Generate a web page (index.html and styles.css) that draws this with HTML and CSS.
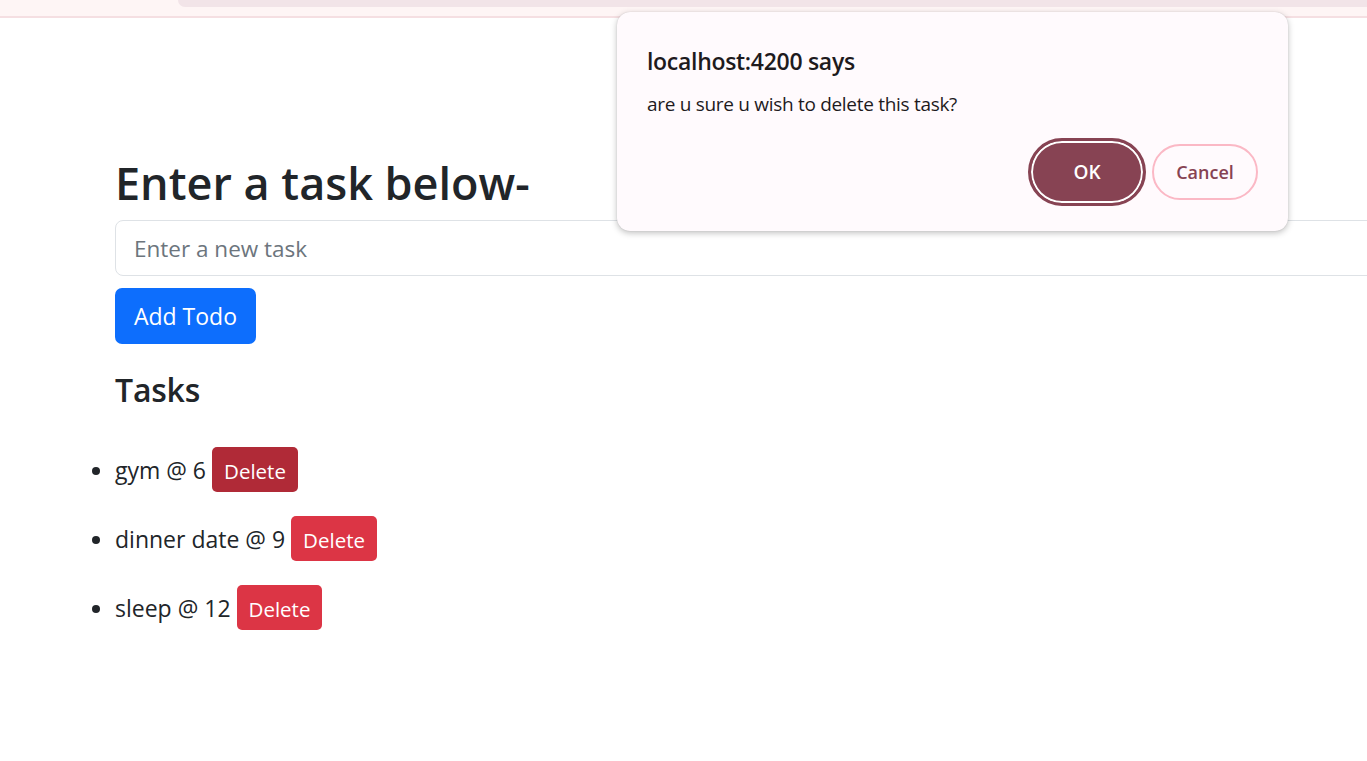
FILE: index.html
```html
<!DOCTYPE html>
<html lang="en">
<head>
<meta charset="utf-8">
<title>Todo</title>
<link rel="stylesheet" href="styles.css">
</head>
<body>
<div class="topbar"><div class="tab"></div></div>
<main class="container">
  <h1 class="title">Enter a task below-</h1>
  <input class="task-input" type="text" placeholder="Enter a new task">
  <button class="btn-add">Add Todo</button>
  <h2 class="tasks-title">Tasks</h2>
  <ul class="task-list">
    <li><div class="item"><span>gym @ 6</span><button class="btn-del btn-del-active">Delete</button></div></li>
    <li><div class="item"><span>dinner date @ 9</span><button class="btn-del">Delete</button></div></li>
    <li><div class="item"><span>sleep @ 12</span><button class="btn-del">Delete</button></div></li>
  </ul>
</main>
<div class="dialog">
  <div class="dialog-title">localhost:4200 says</div>
  <div class="dialog-msg">are u sure u wish to delete this task?</div>
  <div class="dialog-actions">
    <button class="btn-ok">OK</button>
    <button class="btn-cancel">Cancel</button>
  </div>
</div>
</body>
</html>
```

FILE: styles.css
```css
html, body {
  margin: 0;
  padding: 0;
  overflow: hidden;
  background: #ffffff;
  font-family: "Open Sans", "Noto Sans", sans-serif;
  color: #212529;
}
.topbar {
  height: 16px;
  background: #fef5f5;
  border-bottom: 2px solid #f5dfe2;
  position: relative;
}
.tab {
  position: absolute;
  left: 178px;
  right: 0;
  top: 0;
  height: 7px;
  background: #f2e4e8;
  border-bottom-left-radius: 12px;
}
.container {
  padding-left: 115px;
  padding-top: 138px;
}
.title {
  margin: 0 0 10px 0;
  font-size: 45px;
  font-weight: 600;
  line-height: 54px;
  letter-spacing: 0;
}
.task-input {
  display: block;
  box-sizing: border-box;
  width: 1300px;
  height: 56px;
  padding: 0 18px;
  font-family: inherit;
  font-size: 22.5px;
  color: #212529;
  border: 1px solid #dee2e6;
  border-radius: 8px;
  outline: none;
}
.task-input::placeholder {
  color: #6c757d;
}
.btn-add {
  display: block;
  margin-top: 12px;
  box-sizing: border-box;
  width: 141px;
  height: 56px;
  background: #0d6efd;
  color: #fff;
  border: none;
  border-radius: 7px;
  font-family: inherit;
  font-size: 23px;
  padding: 0;
}
.tasks-title {
  margin: 27px 0 0 0;
  font-size: 32px;
  font-weight: 600;
  line-height: 1.2;
  letter-spacing: -0.2px;
}
.task-list {
  margin: 38px 0 0 0;
  padding: 0;
  list-style: disc;
  font-size: 23px;
}
.task-list li {
  margin-bottom: 24px;
}
.item {
  display: flex;
  align-items: center;
  gap: 6px;
  height: 45px;
}
.btn-del {
  height: 45px;
  padding: 0 12px;
  padding-top: 3px;
  background: #dc3545;
  color: #fff;
  border: none;
  border-radius: 5px;
  font-family: inherit;
  font-size: 20.5px;
}
.btn-del-active {
  background: #b02a37;
}
.dialog {
  position: absolute;
  left: 617px;
  top: 12px;
  width: 671px;
  height: 219px;
  box-sizing: border-box;
  background: #fffafd;
  border-radius: 13px;
  box-shadow: 0 2px 6px rgba(0,0,0,0.25), 0 0 1px rgba(0,0,0,0.2);
  padding: 35px 30px 0 30px;
  font-family: "Open Sans", "Noto Sans", sans-serif;
  color: #1e1a1d;
}
.dialog-title {
  font-size: 23px;
  font-weight: 600;
  line-height: 28px;
  letter-spacing: -0.3px;
}
.dialog-msg {
  margin-top: 17px;
  font-size: 19px;
  line-height: 24px;
  letter-spacing: -0.3px;
}
.dialog-actions {
  margin-top: 22px;
  display: flex;
  justify-content: flex-end;
  align-items: center;
  gap: 6px;
}
.btn-ok {
  box-sizing: border-box;
  width: 118px;
  height: 68px;
  border-radius: 34px;
  background: #874353;
  color: #fff;
  border: 3px solid #874353;
  box-shadow: inset 0 0 0 2px #ffffff;
  font-family: inherit;
  font-size: 19px;
  font-weight: 600;
}
.btn-cancel {
  box-sizing: border-box;
  width: 106px;
  height: 56px;
  border-radius: 28px;
  background: #fffafd;
  color: #874353;
  border: 2px solid #fbb8c5;
  font-family: inherit;
  font-size: 18px;
  font-weight: 600;
}
```
